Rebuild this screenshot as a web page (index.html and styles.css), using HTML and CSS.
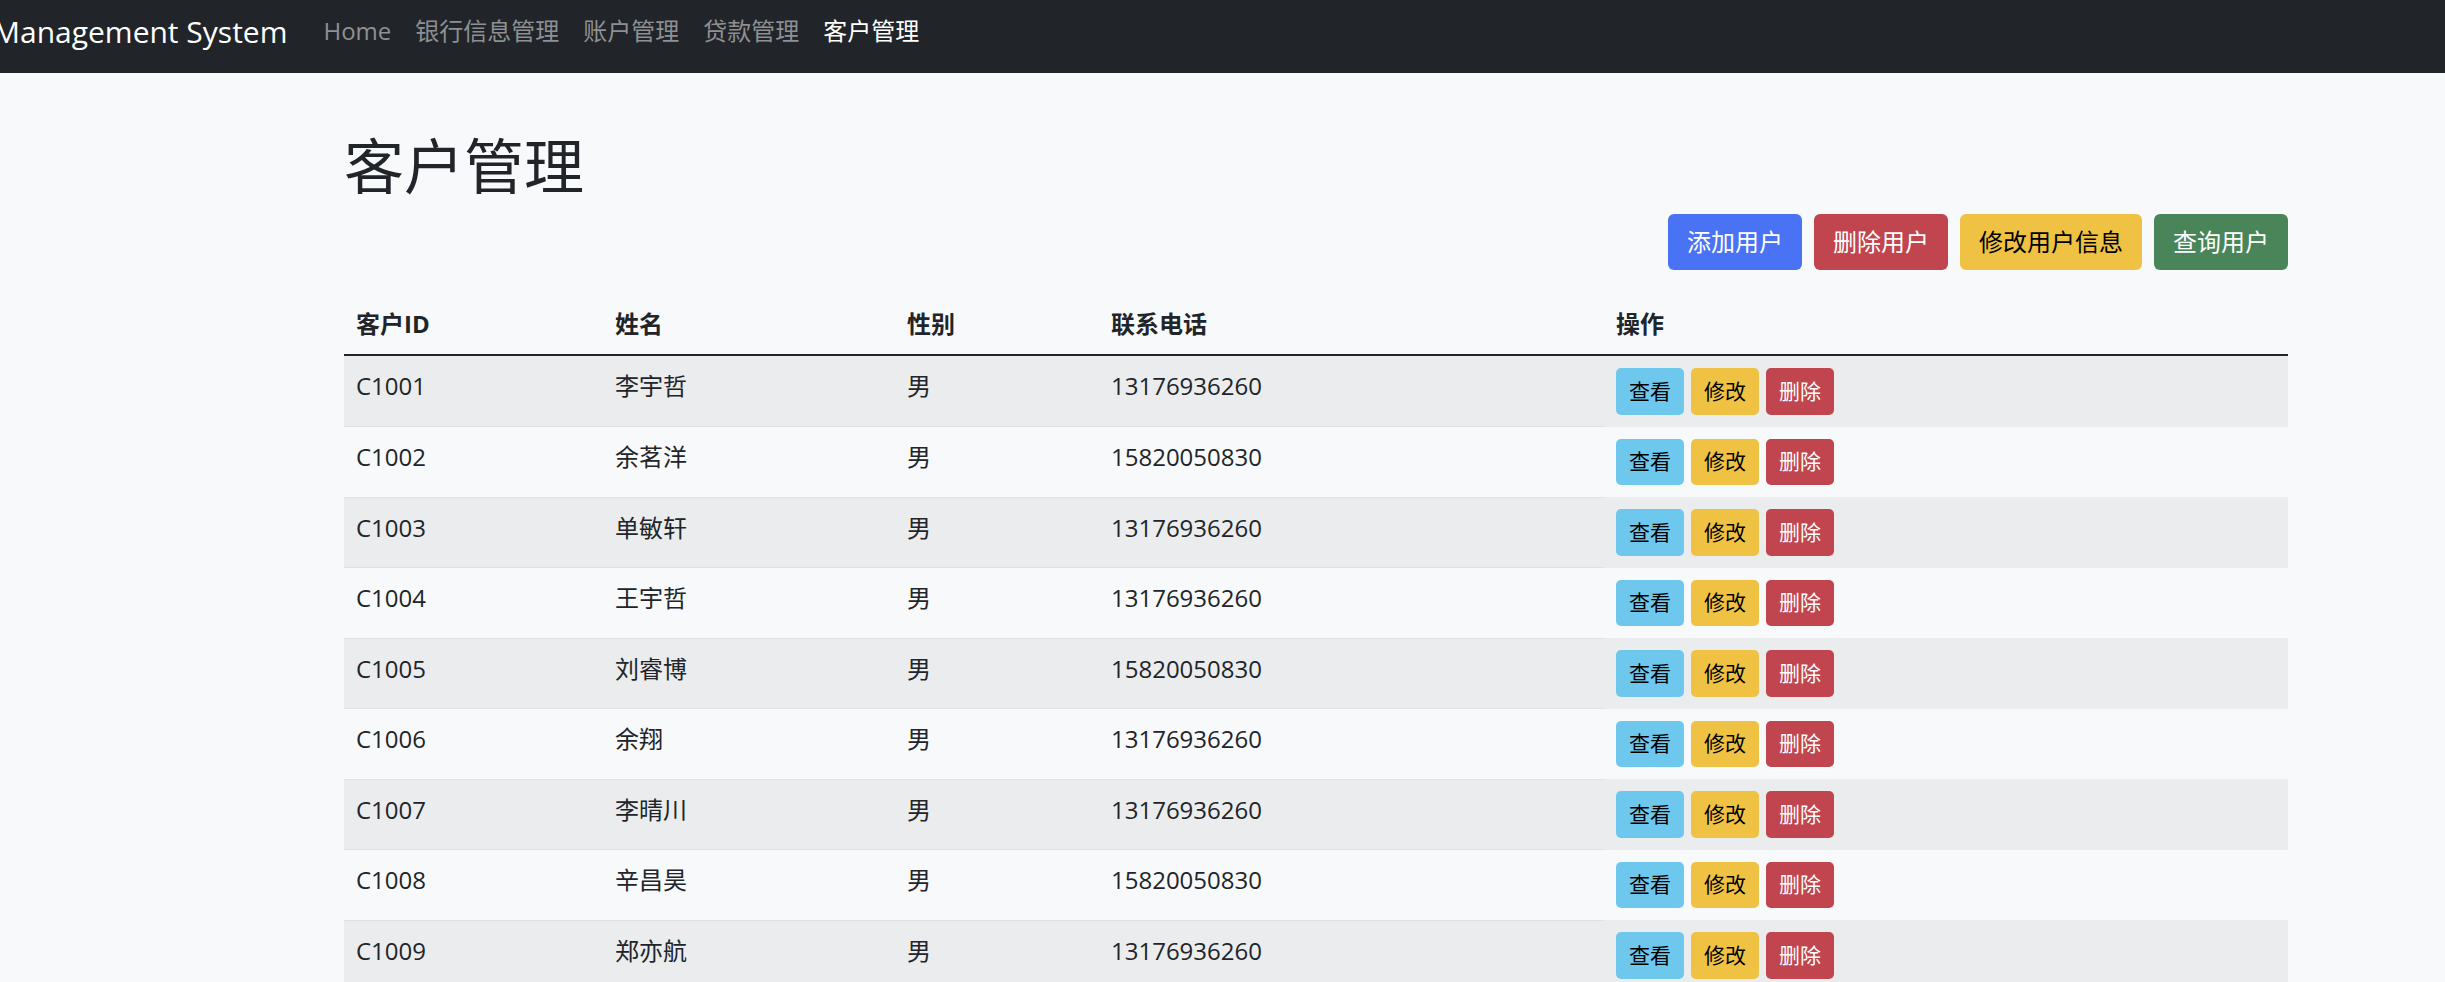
FILE: index.html
```html
<!DOCTYPE html>
<html lang="zh-CN">
<head>
<meta charset="utf-8">
<title>客户管理</title>
<link rel="stylesheet" href="styles.css">
</head>
<body>
<nav class="navbar">
  <a class="brand" href="#">Management System</a>
  <ul class="nav-links">
    <li><a class="nav-link" href="#">Home</a></li>
    <li><a class="nav-link" href="#">银行信息管理</a></li>
    <li><a class="nav-link" href="#">账户管理</a></li>
    <li><a class="nav-link" href="#">贷款管理</a></li>
    <li><a class="nav-link active" href="#">客户管理</a></li>
  </ul>
</nav>
<main class="container">
  <h1 class="title">客户管理</h1>
  <div class="toolbar">
    <button class="btn btn-primary">添加用户</button>
    <button class="btn btn-danger">删除用户</button>
    <button class="btn btn-warning">修改用户信息</button>
    <button class="btn btn-success">查询用户</button>
  </div>
  <table class="table">
    <colgroup>
      <col class="c-id"><col class="c-name"><col class="c-sex"><col class="c-tel"><col class="c-op">
    </colgroup>
    <thead>
      <tr><th>客户ID</th><th>姓名</th><th>性别</th><th>联系电话</th><th>操作</th></tr>
    </thead>
    <tbody>
      <tr><td>C1001</td><td>李宇哲</td><td>男</td><td>13176936260</td><td class="ops"><button class="btn-sm btn-info">查看</button><button class="btn-sm btn-warning">修改</button><button class="btn-sm btn-danger">删除</button></td></tr>
      <tr><td>C1002</td><td>余茗洋</td><td>男</td><td>15820050830</td><td class="ops"><button class="btn-sm btn-info">查看</button><button class="btn-sm btn-warning">修改</button><button class="btn-sm btn-danger">删除</button></td></tr>
      <tr><td>C1003</td><td>单敏轩</td><td>男</td><td>13176936260</td><td class="ops"><button class="btn-sm btn-info">查看</button><button class="btn-sm btn-warning">修改</button><button class="btn-sm btn-danger">删除</button></td></tr>
      <tr><td>C1004</td><td>王宇哲</td><td>男</td><td>13176936260</td><td class="ops"><button class="btn-sm btn-info">查看</button><button class="btn-sm btn-warning">修改</button><button class="btn-sm btn-danger">删除</button></td></tr>
      <tr><td>C1005</td><td>刘睿博</td><td>男</td><td>15820050830</td><td class="ops"><button class="btn-sm btn-info">查看</button><button class="btn-sm btn-warning">修改</button><button class="btn-sm btn-danger">删除</button></td></tr>
      <tr><td>C1006</td><td>余翔</td><td>男</td><td>13176936260</td><td class="ops"><button class="btn-sm btn-info">查看</button><button class="btn-sm btn-warning">修改</button><button class="btn-sm btn-danger">删除</button></td></tr>
      <tr><td>C1007</td><td>李晴川</td><td>男</td><td>13176936260</td><td class="ops"><button class="btn-sm btn-info">查看</button><button class="btn-sm btn-warning">修改</button><button class="btn-sm btn-danger">删除</button></td></tr>
      <tr><td>C1008</td><td>辛昌昊</td><td>男</td><td>15820050830</td><td class="ops"><button class="btn-sm btn-info">查看</button><button class="btn-sm btn-warning">修改</button><button class="btn-sm btn-danger">删除</button></td></tr>
      <tr><td>C1009</td><td>郑亦航</td><td>男</td><td>13176936260</td><td class="ops"><button class="btn-sm btn-info">查看</button><button class="btn-sm btn-warning">修改</button><button class="btn-sm btn-danger">删除</button></td></tr>
    </tbody>
  </table>
</main>
</body>
</html>
```
FILE: styles.css
```css
* { box-sizing: border-box; }
html, body { margin: 0; padding: 0; }
body {
  background: #f8f9fa;
  color: #212529;
  font-family: "Open Sans", "Noto Sans CJK SC", sans-serif;
  font-size: 24px;
  line-height: 36px;
  overflow: hidden;
  height: 982px;
}
.navbar {
  height: 73px;
  background: #212529;
  display: flex;
  align-items: center;
  padding-bottom: 11px;
  overflow: hidden;
}
.brand {
  font-size: 30px;
  line-height: 45px;
  color: #fff;
  text-decoration: none;
  margin-left: -7px;
  margin-right: 24px;
  white-space: nowrap;
}
.nav-links {
  display: flex;
  list-style: none;
  margin: 0;
  padding: 0;
}
.nav-link {
  display: block;
  padding: 0 12px;
  color: #8e9093;
  text-decoration: none;
  white-space: nowrap;
}
.nav-link.active { color: #fff; }
.container {
  width: 1944px;
  margin-left: 344px;
  padding-top: 57px;
}
.title {
  margin: 0 0 12px;
  font-size: 60px;
  line-height: 72px;
  font-weight: 400;
}
.toolbar {
  display: flex;
  justify-content: flex-end;
  gap: 12px;
  margin-bottom: 24px;
}
.btn {
  font-family: inherit;
  font-size: 24px;
  line-height: 36px;
  padding: 9px 18px;
  border: 1.5px solid transparent;
  border-radius: 6px;
  cursor: pointer;
}
.btn-primary { background: #4a72f5; color: #fff; }
.btn-danger { background: #c0454e; color: #fff; }
.btn-warning { background: #efc244; color: #000; }
.btn-success { background: #4a8559; color: #fff; }
.btn-info { background: #6ec8ee; color: #000; }
.table {
  width: 100%;
  border-collapse: collapse;
}
.c-id { width: 259px; }
.c-name { width: 292px; }
.c-sex { width: 204px; }
.c-tel { width: 505px; }
.table th, .table td {
  padding: 12px;
  text-align: left;
  vertical-align: top;
}
.table th {
  font-weight: 700;
  border-bottom: 2px solid #212529;
}
.table td { border-bottom: 1px solid #dee2e6; }
.table tbody tr:nth-child(odd) td { background: #ebecee; }
.ops {
  display: flex;
  gap: 7px;
}
.table td.ops { border-bottom: 0; }
.btn-sm {
  font-family: inherit;
  font-size: 21px;
  line-height: 31.5px;
  height: 46.5px;
  padding: 6px 12px;
  border: 1px solid transparent;
  border-radius: 5px;
  cursor: pointer;
}
```
